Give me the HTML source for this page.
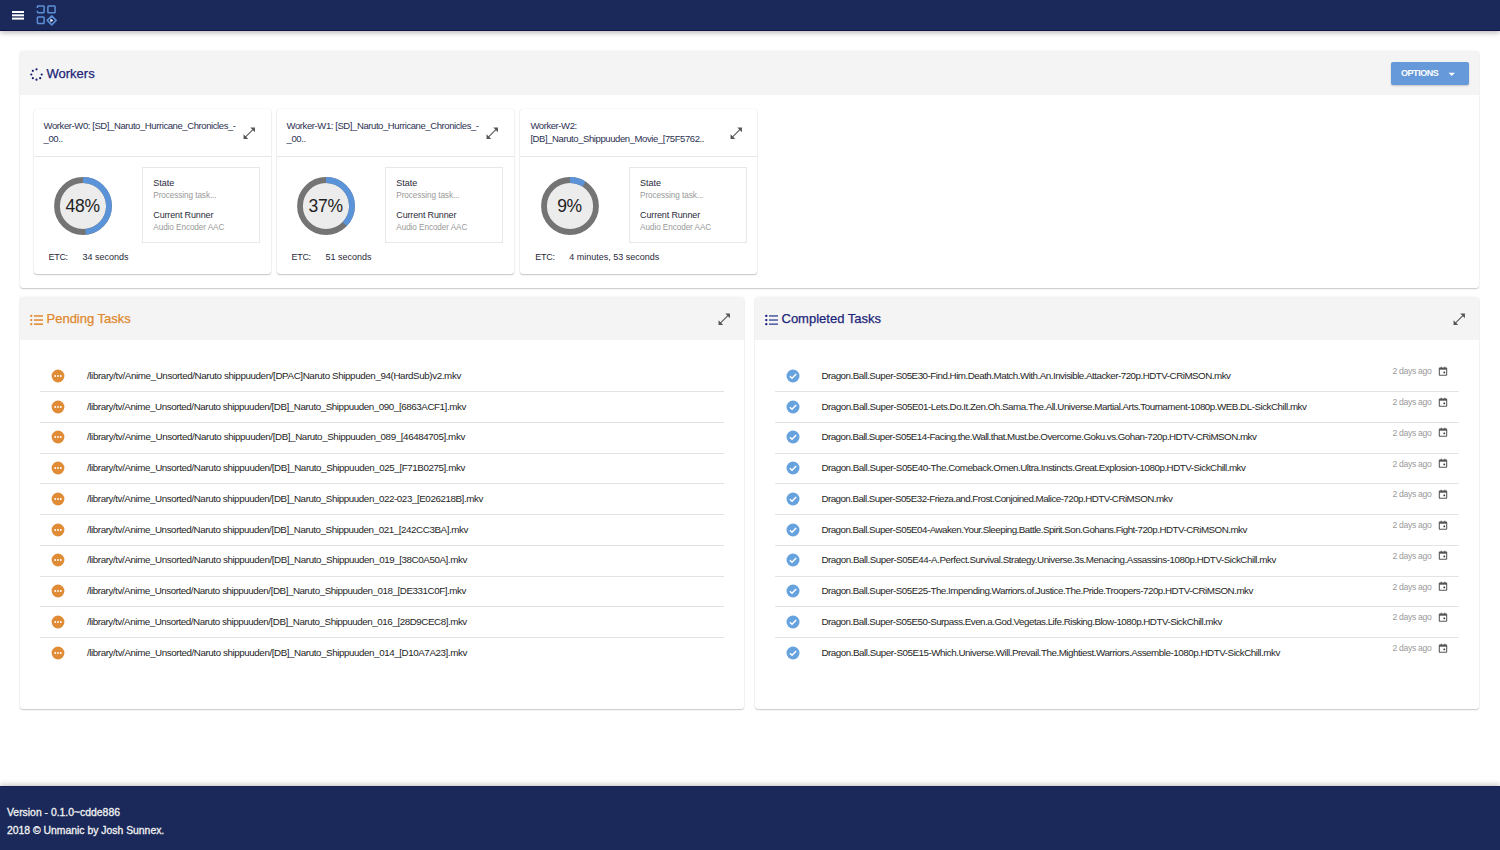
<!DOCTYPE html>
<html><head><meta charset="utf-8"><title>Unmanic</title><style>
*{box-sizing:border-box;margin:0;padding:0}
html,body{width:1500px;height:850px;overflow:hidden;background:#fff;font-family:"Liberation Sans",sans-serif;color:#333;position:relative}
.abs{position:absolute}
.hdr{left:0;top:0;width:1500px;height:31px;background:#1b295a;border-bottom:1px solid #0d1442;box-shadow:0 2px 5px rgba(0,0,0,.26)}
.card{position:absolute;background:#fff;border-radius:3px;box-shadow:0 1px 1.5px rgba(0,0,0,.2),0 0 1.5px rgba(0,0,0,.1)}
.chead{position:absolute;left:0;top:0;right:0;background:#f4f4f4;border-radius:3px 3px 0 0}
.title{position:absolute;font-size:13px;white-space:nowrap;line-height:1;-webkit-text-stroke:0.25px currentColor}
.wcard{position:absolute;background:#fff;border-radius:3px;box-shadow:0 1px 1.5px rgba(0,0,0,.22),0 0 1.5px rgba(0,0,0,.1)}
.wtxt{position:absolute;left:9.6px;top:10px;font-size:9.5px;line-height:13.2px;color:#2c3152;white-space:nowrap;letter-spacing:-0.41px}
.wdiv{position:absolute;left:0;right:0;top:47px;height:1px;background:#e6e6e6}
.sbox{position:absolute;border:1px solid #e8e8e8}
.lbl{position:absolute;font-size:9px;color:#2a2a3a;white-space:nowrap;line-height:1}
.sub{position:absolute;font-size:8.2px;color:#999;white-space:nowrap;line-height:1;letter-spacing:-0.08px}
.row{position:absolute;font-size:9.8px;color:#262626;white-space:nowrap;line-height:1}
.div{position:absolute;height:1px;background:#e3e3e3}
.ago{position:absolute;font-size:8.6px;color:#9a9a9a;white-space:nowrap;line-height:1;letter-spacing:-0.3px}
.ftr{left:0;top:786px;width:1500px;height:64px;background:#1b295a;border-top:1px solid #172153;box-shadow:0 -2px 5px rgba(0,0,0,.2)}
.ftxt{position:absolute;left:7px;font-size:10.4px;color:#f2f2f2;white-space:nowrap;line-height:1;-webkit-text-stroke:0.3px currentColor}
</style></head>
<body>
<div class="abs hdr"></div>
<svg class="abs" style="left:0;top:0" width="70" height="31" viewBox="0 0 70 31">
<rect x="12" y="11" width="12" height="2" fill="#fff"/><rect x="12" y="14.3" width="12" height="2" fill="#fff"/><rect x="12" y="17.6" width="12" height="2" fill="#fff"/>
<path d="M37.4 8 V6.6 Q37.4 5.9 38.1 5.9 H43.4 Q44.1 5.9 44.1 6.6 V12.1 Q44.1 12.8 43.4 12.8 H38.1 Q37.4 12.8 37.4 12.1 V10.7" fill="none" stroke="#5d8fd6" stroke-width="1.5"/>
<rect x="47.9" y="5.9" width="7.2" height="6.9" rx="0.8" fill="none" stroke="#5d8fd6" stroke-width="1.5"/>
<rect x="37.4" y="16.9" width="6.7" height="6.6" rx="0.8" fill="none" stroke="#5d8fd6" stroke-width="1.5"/>
<path d="M51.7 15.9 L56.2 20.4 L51.7 24.9 L47.2 20.4 Z" fill="none" stroke="#5d8fd6" stroke-width="1.5" stroke-linejoin="round"/>
<path d="M50.4 18.5 L53.3 20.4 L50.4 22.3 Z" fill="#fff"/>
</svg>
<div class="card" style="left:20px;top:51px;width:1459px;height:237px">
<div class="chead" style="height:44px"></div>
<svg class="abs" style="left:10px;top:17px" width="13" height="13" viewBox="0 0 13 13"><circle cx="6.50" cy="1.30" r="1.1" fill="#14196a"/><circle cx="11.70" cy="6.50" r="1.1" fill="#14196a"/><circle cx="10.18" cy="10.18" r="1.1" fill="#14196a"/><circle cx="6.50" cy="11.70" r="1.1" fill="#14196a"/><circle cx="2.82" cy="10.18" r="1.1" fill="#14196a"/><circle cx="1.30" cy="6.50" r="1.1" fill="#14196a"/><circle cx="2.82" cy="2.82" r="1.1" fill="#14196a"/></svg>
<div class="title" style="left:26.5px;top:15.5px;color:#1c2579">Workers</div>
<div class="abs" style="left:1371px;top:11px;width:78px;height:23px;background:#6599da;border-radius:2px;box-shadow:0 1px 2px rgba(0,0,0,.2)"></div>
<div class="abs" style="left:1381px;top:18px;font-size:9px;font-weight:bold;color:#fff;letter-spacing:-0.45px;white-space:nowrap;line-height:1">OPTIONS</div>
<svg class="abs" style="left:1428px;top:21px" width="8" height="5" viewBox="0 0 8 5"><path d="M0.5 0.8 H7 L3.75 4 Z" fill="#fff"/></svg>
</div>
<div class="wcard" style="left:34px;top:109px;width:237px;height:165px">
<div class="wtxt" style="left:9.6px">Worker-W0: [SD]_Naruto_Hurricane_Chronicles_-<br>_00..</div>
<div class="wdiv"></div>
<svg class="abs" style="left:207.7px;top:16.7px" width="14.5" height="14.5" viewBox="0 0 14 14"><path d="M2.5 11.5 L11.5 2.5" stroke="#555" stroke-width="1.0"/><path d="M8 1.5 H12.5 V6 Z" fill="#555"/><path d="M1.5 8 V12.5 H6 Z" fill="#555"/></svg>
<svg class="abs" style="left:18.700000000000003px;top:67.2px" width="60" height="60" viewBox="0 0 60 60"><circle cx="30" cy="30" r="26.0" fill="#ececec" stroke="#747474" stroke-width="5.8"/><circle cx="30" cy="30" r="26.0" fill="none" stroke="#5b93d8" stroke-width="5.8" stroke-dasharray="78.41 163.36" transform="rotate(-90 30 30)"/></svg>
<div class="abs" style="left:23.700000000000003px;top:88.2px;width:50px;text-align:center;font-size:17.5px;color:#222;line-height:18px;letter-spacing:-0.3px">48%</div>
<div class="sbox" style="left:108px;top:58px;width:118px;height:76px"></div>
<div class="lbl" style="left:119.3px;top:70px">State</div>
<div class="sub" style="left:119.3px;top:82.5px">Processing task...</div>
<div class="lbl" style="left:119.3px;top:101.8px;letter-spacing:-0.15px">Current Runner</div>
<div class="sub" style="left:119.3px;top:114.5px">Audio Encoder AAC</div>
<div class="lbl" style="left:14.5px;top:144px;letter-spacing:-0.3px">ETC:</div>
<div class="lbl" style="left:48.5px;top:144px">34 seconds</div>
</div>
<div class="wcard" style="left:277px;top:109px;width:237px;height:165px">
<div class="wtxt" style="left:9.6px">Worker-W1: [SD]_Naruto_Hurricane_Chronicles_-<br>_00..</div>
<div class="wdiv"></div>
<svg class="abs" style="left:207.7px;top:16.7px" width="14.5" height="14.5" viewBox="0 0 14 14"><path d="M2.5 11.5 L11.5 2.5" stroke="#555" stroke-width="1.0"/><path d="M8 1.5 H12.5 V6 Z" fill="#555"/><path d="M1.5 8 V12.5 H6 Z" fill="#555"/></svg>
<svg class="abs" style="left:18.700000000000003px;top:67.2px" width="60" height="60" viewBox="0 0 60 60"><circle cx="30" cy="30" r="26.0" fill="#ececec" stroke="#747474" stroke-width="5.8"/><circle cx="30" cy="30" r="26.0" fill="none" stroke="#5b93d8" stroke-width="5.8" stroke-dasharray="60.44 163.36" transform="rotate(-90 30 30)"/></svg>
<div class="abs" style="left:23.700000000000003px;top:88.2px;width:50px;text-align:center;font-size:17.5px;color:#222;line-height:18px;letter-spacing:-0.3px">37%</div>
<div class="sbox" style="left:108px;top:58px;width:118px;height:76px"></div>
<div class="lbl" style="left:119.3px;top:70px">State</div>
<div class="sub" style="left:119.3px;top:82.5px">Processing task...</div>
<div class="lbl" style="left:119.3px;top:101.8px;letter-spacing:-0.15px">Current Runner</div>
<div class="sub" style="left:119.3px;top:114.5px">Audio Encoder AAC</div>
<div class="lbl" style="left:14.5px;top:144px;letter-spacing:-0.3px">ETC:</div>
<div class="lbl" style="left:48.5px;top:144px">51 seconds</div>
</div>
<div class="wcard" style="left:520px;top:109px;width:237px;height:165px">
<div class="wtxt" style="left:10.4px">Worker-W2:<br>[DB]_Naruto_Shippuuden_Movie_[75F5762..</div>
<div class="wdiv"></div>
<svg class="abs" style="left:208.5px;top:16.7px" width="14.5" height="14.5" viewBox="0 0 14 14"><path d="M2.5 11.5 L11.5 2.5" stroke="#555" stroke-width="1.0"/><path d="M8 1.5 H12.5 V6 Z" fill="#555"/><path d="M1.5 8 V12.5 H6 Z" fill="#555"/></svg>
<svg class="abs" style="left:19.5px;top:67.2px" width="60" height="60" viewBox="0 0 60 60"><circle cx="30" cy="30" r="26.0" fill="#ececec" stroke="#747474" stroke-width="5.8"/><circle cx="30" cy="30" r="26.0" fill="none" stroke="#5b93d8" stroke-width="5.8" stroke-dasharray="14.70 163.36" transform="rotate(-90 30 30)"/></svg>
<div class="abs" style="left:24.500000000000004px;top:88.2px;width:50px;text-align:center;font-size:17.5px;color:#222;line-height:18px;letter-spacing:-0.3px">9%</div>
<div class="sbox" style="left:109px;top:58px;width:118px;height:76px"></div>
<div class="lbl" style="left:120.1px;top:70px">State</div>
<div class="sub" style="left:120.1px;top:82.5px">Processing task...</div>
<div class="lbl" style="left:120.1px;top:101.8px;letter-spacing:-0.15px">Current Runner</div>
<div class="sub" style="left:120.1px;top:114.5px">Audio Encoder AAC</div>
<div class="lbl" style="left:15.3px;top:144px;letter-spacing:-0.3px">ETC:</div>
<div class="lbl" style="left:49.3px;top:144px">4 minutes, 53 seconds</div>
</div>
<div class="card" style="left:20px;top:297px;width:724px;height:412px">
<div class="chead" style="height:43px"></div>
<svg class="abs" style="left:9.8px;top:17px" width="14" height="12" viewBox="0 -0.55 14 12"><circle cx="1.3" cy="1.4" r="1.15" fill="#e0882c"/><circle cx="1.3" cy="5.5" r="1.15" fill="#e0882c"/><circle cx="1.3" cy="9.6" r="1.15" fill="#e0882c"/><rect x="4" y="0.65" width="9" height="1.5" fill="#e0882c"/><rect x="4" y="4.75" width="9" height="1.5" fill="#e0882c"/><rect x="4" y="8.85" width="9" height="1.5" fill="#e0882c"/></svg>
<div class="title" style="left:26.5px;top:14.5px;color:#e0882c">Pending Tasks</div>
<svg class="abs" style="left:696.8px;top:15.4px" width="14.5" height="14.5" viewBox="0 0 14 14"><path d="M2.5 11.5 L11.5 2.5" stroke="#555" stroke-width="1.0"/><path d="M8 1.5 H12.5 V6 Z" fill="#555"/><path d="M1.5 8 V12.5 H6 Z" fill="#555"/></svg>
</div>
<div class="row" style="left:87.0px;top:370.80px;letter-spacing:-0.391px">/library/tv/Anime_Unsorted/Naruto shippuuden/[DPAC]Naruto Shippuden_94(HardSub)v2.mkv</div>
<div class="div" style="left:40px;top:391.20px;width:684px"></div>
<svg class="abs" style="left:51.40px;top:368.90px" width="14" height="14" viewBox="0 0 14 14"><circle cx="7" cy="7" r="6.4" fill="#e08b36"/><circle cx="4.2" cy="7" r="0.95" fill="#fff"/><circle cx="7" cy="7" r="0.95" fill="#fff"/><circle cx="9.8" cy="7" r="0.95" fill="#fff"/></svg>
<div class="row" style="left:87.0px;top:401.55px;letter-spacing:-0.426px">/library/tv/Anime_Unsorted/Naruto shippuuden/[DB]_Naruto_Shippuuden_090_[6863ACF1].mkv</div>
<div class="div" style="left:40px;top:421.95px;width:684px"></div>
<svg class="abs" style="left:51.40px;top:399.65px" width="14" height="14" viewBox="0 0 14 14"><circle cx="7" cy="7" r="6.4" fill="#e08b36"/><circle cx="4.2" cy="7" r="0.95" fill="#fff"/><circle cx="7" cy="7" r="0.95" fill="#fff"/><circle cx="9.8" cy="7" r="0.95" fill="#fff"/></svg>
<div class="row" style="left:87.0px;top:432.30px;letter-spacing:-0.400px">/library/tv/Anime_Unsorted/Naruto shippuuden/[DB]_Naruto_Shippuuden_089_[46484705].mkv</div>
<div class="div" style="left:40px;top:452.70px;width:684px"></div>
<svg class="abs" style="left:51.40px;top:430.40px" width="14" height="14" viewBox="0 0 14 14"><circle cx="7" cy="7" r="6.4" fill="#e08b36"/><circle cx="4.2" cy="7" r="0.95" fill="#fff"/><circle cx="7" cy="7" r="0.95" fill="#fff"/><circle cx="9.8" cy="7" r="0.95" fill="#fff"/></svg>
<div class="row" style="left:87.0px;top:463.05px;letter-spacing:-0.419px">/library/tv/Anime_Unsorted/Naruto shippuuden/[DB]_Naruto_Shippuuden_025_[F71B0275].mkv</div>
<div class="div" style="left:40px;top:483.45px;width:684px"></div>
<svg class="abs" style="left:51.40px;top:461.15px" width="14" height="14" viewBox="0 0 14 14"><circle cx="7" cy="7" r="6.4" fill="#e08b36"/><circle cx="4.2" cy="7" r="0.95" fill="#fff"/><circle cx="7" cy="7" r="0.95" fill="#fff"/><circle cx="9.8" cy="7" r="0.95" fill="#fff"/></svg>
<div class="row" style="left:87.0px;top:493.80px;letter-spacing:-0.424px">/library/tv/Anime_Unsorted/Naruto shippuuden/[DB]_Naruto_Shippuuden_022-023_[E026218B].mkv</div>
<div class="div" style="left:40px;top:514.20px;width:684px"></div>
<svg class="abs" style="left:51.40px;top:491.90px" width="14" height="14" viewBox="0 0 14 14"><circle cx="7" cy="7" r="6.4" fill="#e08b36"/><circle cx="4.2" cy="7" r="0.95" fill="#fff"/><circle cx="7" cy="7" r="0.95" fill="#fff"/><circle cx="9.8" cy="7" r="0.95" fill="#fff"/></svg>
<div class="row" style="left:87.0px;top:524.55px;letter-spacing:-0.428px">/library/tv/Anime_Unsorted/Naruto shippuuden/[DB]_Naruto_Shippuuden_021_[242CC3BA].mkv</div>
<div class="div" style="left:40px;top:544.95px;width:684px"></div>
<svg class="abs" style="left:51.40px;top:522.65px" width="14" height="14" viewBox="0 0 14 14"><circle cx="7" cy="7" r="6.4" fill="#e08b36"/><circle cx="4.2" cy="7" r="0.95" fill="#fff"/><circle cx="7" cy="7" r="0.95" fill="#fff"/><circle cx="9.8" cy="7" r="0.95" fill="#fff"/></svg>
<div class="row" style="left:87.0px;top:555.30px;letter-spacing:-0.421px">/library/tv/Anime_Unsorted/Naruto shippuuden/[DB]_Naruto_Shippuuden_019_[38C0A50A].mkv</div>
<div class="div" style="left:40px;top:575.70px;width:684px"></div>
<svg class="abs" style="left:51.40px;top:553.40px" width="14" height="14" viewBox="0 0 14 14"><circle cx="7" cy="7" r="6.4" fill="#e08b36"/><circle cx="4.2" cy="7" r="0.95" fill="#fff"/><circle cx="7" cy="7" r="0.95" fill="#fff"/><circle cx="9.8" cy="7" r="0.95" fill="#fff"/></svg>
<div class="row" style="left:87.0px;top:586.05px;letter-spacing:-0.445px">/library/tv/Anime_Unsorted/Naruto shippuuden/[DB]_Naruto_Shippuuden_018_[DE331C0F].mkv</div>
<div class="div" style="left:40px;top:606.45px;width:684px"></div>
<svg class="abs" style="left:51.40px;top:584.15px" width="14" height="14" viewBox="0 0 14 14"><circle cx="7" cy="7" r="6.4" fill="#e08b36"/><circle cx="4.2" cy="7" r="0.95" fill="#fff"/><circle cx="7" cy="7" r="0.95" fill="#fff"/><circle cx="9.8" cy="7" r="0.95" fill="#fff"/></svg>
<div class="row" style="left:87.0px;top:616.80px;letter-spacing:-0.447px">/library/tv/Anime_Unsorted/Naruto shippuuden/[DB]_Naruto_Shippuuden_016_[28D9CEC8].mkv</div>
<div class="div" style="left:40px;top:637.20px;width:684px"></div>
<svg class="abs" style="left:51.40px;top:614.90px" width="14" height="14" viewBox="0 0 14 14"><circle cx="7" cy="7" r="6.4" fill="#e08b36"/><circle cx="4.2" cy="7" r="0.95" fill="#fff"/><circle cx="7" cy="7" r="0.95" fill="#fff"/><circle cx="9.8" cy="7" r="0.95" fill="#fff"/></svg>
<div class="row" style="left:87.0px;top:647.55px;letter-spacing:-0.421px">/library/tv/Anime_Unsorted/Naruto shippuuden/[DB]_Naruto_Shippuuden_014_[D10A7A23].mkv</div>
<svg class="abs" style="left:51.40px;top:645.65px" width="14" height="14" viewBox="0 0 14 14"><circle cx="7" cy="7" r="6.4" fill="#e08b36"/><circle cx="4.2" cy="7" r="0.95" fill="#fff"/><circle cx="7" cy="7" r="0.95" fill="#fff"/><circle cx="9.8" cy="7" r="0.95" fill="#fff"/></svg>
<div class="card" style="left:755px;top:297px;width:724px;height:412px">
<div class="chead" style="height:43px"></div>
<svg class="abs" style="left:9.8px;top:17px" width="14" height="12" viewBox="0 -0.55 14 12"><circle cx="1.3" cy="1.4" r="1.15" fill="#10167a"/><circle cx="1.3" cy="5.5" r="1.15" fill="#10167a"/><circle cx="1.3" cy="9.6" r="1.15" fill="#10167a"/><rect x="4" y="0.65" width="9" height="1.5" fill="#4a5a9e"/><rect x="4" y="4.75" width="9" height="1.5" fill="#4a5a9e"/><rect x="4" y="8.85" width="9" height="1.5" fill="#4a5a9e"/></svg>
<div class="title" style="left:26.5px;top:14.5px;color:#1c2579">Completed Tasks</div>
<svg class="abs" style="left:696.8px;top:15.4px" width="14.5" height="14.5" viewBox="0 0 14 14"><path d="M2.5 11.5 L11.5 2.5" stroke="#555" stroke-width="1.0"/><path d="M8 1.5 H12.5 V6 Z" fill="#555"/><path d="M1.5 8 V12.5 H6 Z" fill="#555"/></svg>
</div>
<div class="row" style="left:821.4px;top:370.80px;letter-spacing:-0.502px">Dragon.Ball.Super-S05E30-Find.Him.Death.Match.With.An.Invisible.Attacker-720p.HDTV-CRiMSON.mkv</div>
<div class="div" style="left:775px;top:391.20px;width:684px"></div>
<svg class="abs" style="left:786.20px;top:368.90px" width="14" height="14" viewBox="0 0 14 14"><circle cx="7" cy="7" r="6.5" fill="#65a2de"/><path d="M3.9 7.2 L6 9.2 L10.2 4.9" fill="none" stroke="#fff" stroke-width="1.5"/></svg>
<div class="ago" style="left:1392.5px;top:367.40px">2 days ago</div>
<svg class="abs" style="left:1438px;top:365.90px" width="10" height="10" viewBox="0 0 10 10"><rect x="1.3" y="2" width="7.4" height="7.2" rx="0.4" fill="none" stroke="#555" stroke-width="1.05"/><rect x="1.3" y="2" width="7.4" height="1.7" fill="#555"/><rect x="2.7" y="0.7" width="1" height="1.6" fill="#555"/><rect x="6.3" y="0.7" width="1" height="1.6" fill="#555"/><rect x="5.5" y="5.6" width="1.6" height="1.6" fill="#2a2a40"/></svg>
<div class="row" style="left:821.4px;top:401.55px;letter-spacing:-0.484px">Dragon.Ball.Super-S05E01-Lets.Do.It.Zen.Oh.Sama.The.All.Universe.Martial.Arts.Tournament-1080p.WEB.DL-SickChill.mkv</div>
<div class="div" style="left:775px;top:421.95px;width:684px"></div>
<svg class="abs" style="left:786.20px;top:399.65px" width="14" height="14" viewBox="0 0 14 14"><circle cx="7" cy="7" r="6.5" fill="#65a2de"/><path d="M3.9 7.2 L6 9.2 L10.2 4.9" fill="none" stroke="#fff" stroke-width="1.5"/></svg>
<div class="ago" style="left:1392.5px;top:398.15px">2 days ago</div>
<svg class="abs" style="left:1438px;top:396.65px" width="10" height="10" viewBox="0 0 10 10"><rect x="1.3" y="2" width="7.4" height="7.2" rx="0.4" fill="none" stroke="#555" stroke-width="1.05"/><rect x="1.3" y="2" width="7.4" height="1.7" fill="#555"/><rect x="2.7" y="0.7" width="1" height="1.6" fill="#555"/><rect x="6.3" y="0.7" width="1" height="1.6" fill="#555"/><rect x="5.5" y="5.6" width="1.6" height="1.6" fill="#2a2a40"/></svg>
<div class="row" style="left:821.4px;top:432.30px;letter-spacing:-0.537px">Dragon.Ball.Super-S05E14-Facing.the.Wall.that.Must.be.Overcome.Goku.vs.Gohan-720p.HDTV-CRiMSON.mkv</div>
<div class="div" style="left:775px;top:452.70px;width:684px"></div>
<svg class="abs" style="left:786.20px;top:430.40px" width="14" height="14" viewBox="0 0 14 14"><circle cx="7" cy="7" r="6.5" fill="#65a2de"/><path d="M3.9 7.2 L6 9.2 L10.2 4.9" fill="none" stroke="#fff" stroke-width="1.5"/></svg>
<div class="ago" style="left:1392.5px;top:428.90px">2 days ago</div>
<svg class="abs" style="left:1438px;top:427.40px" width="10" height="10" viewBox="0 0 10 10"><rect x="1.3" y="2" width="7.4" height="7.2" rx="0.4" fill="none" stroke="#555" stroke-width="1.05"/><rect x="1.3" y="2" width="7.4" height="1.7" fill="#555"/><rect x="2.7" y="0.7" width="1" height="1.6" fill="#555"/><rect x="6.3" y="0.7" width="1" height="1.6" fill="#555"/><rect x="5.5" y="5.6" width="1.6" height="1.6" fill="#2a2a40"/></svg>
<div class="row" style="left:821.4px;top:463.05px;letter-spacing:-0.491px">Dragon.Ball.Super-S05E40-The.Comeback.Omen.Ultra.Instincts.Great.Explosion-1080p.HDTV-SickChill.mkv</div>
<div class="div" style="left:775px;top:483.45px;width:684px"></div>
<svg class="abs" style="left:786.20px;top:461.15px" width="14" height="14" viewBox="0 0 14 14"><circle cx="7" cy="7" r="6.5" fill="#65a2de"/><path d="M3.9 7.2 L6 9.2 L10.2 4.9" fill="none" stroke="#fff" stroke-width="1.5"/></svg>
<div class="ago" style="left:1392.5px;top:459.65px">2 days ago</div>
<svg class="abs" style="left:1438px;top:458.15px" width="10" height="10" viewBox="0 0 10 10"><rect x="1.3" y="2" width="7.4" height="7.2" rx="0.4" fill="none" stroke="#555" stroke-width="1.05"/><rect x="1.3" y="2" width="7.4" height="1.7" fill="#555"/><rect x="2.7" y="0.7" width="1" height="1.6" fill="#555"/><rect x="6.3" y="0.7" width="1" height="1.6" fill="#555"/><rect x="5.5" y="5.6" width="1.6" height="1.6" fill="#2a2a40"/></svg>
<div class="row" style="left:821.4px;top:493.80px;letter-spacing:-0.541px">Dragon.Ball.Super-S05E32-Frieza.and.Frost.Conjoined.Malice-720p.HDTV-CRiMSON.mkv</div>
<div class="div" style="left:775px;top:514.20px;width:684px"></div>
<svg class="abs" style="left:786.20px;top:491.90px" width="14" height="14" viewBox="0 0 14 14"><circle cx="7" cy="7" r="6.5" fill="#65a2de"/><path d="M3.9 7.2 L6 9.2 L10.2 4.9" fill="none" stroke="#fff" stroke-width="1.5"/></svg>
<div class="ago" style="left:1392.5px;top:490.40px">2 days ago</div>
<svg class="abs" style="left:1438px;top:488.90px" width="10" height="10" viewBox="0 0 10 10"><rect x="1.3" y="2" width="7.4" height="7.2" rx="0.4" fill="none" stroke="#555" stroke-width="1.05"/><rect x="1.3" y="2" width="7.4" height="1.7" fill="#555"/><rect x="2.7" y="0.7" width="1" height="1.6" fill="#555"/><rect x="6.3" y="0.7" width="1" height="1.6" fill="#555"/><rect x="5.5" y="5.6" width="1.6" height="1.6" fill="#2a2a40"/></svg>
<div class="row" style="left:821.4px;top:524.55px;letter-spacing:-0.527px">Dragon.Ball.Super-S05E04-Awaken.Your.Sleeping.Battle.Spirit.Son.Gohans.Fight-720p.HDTV-CRiMSON.mkv</div>
<div class="div" style="left:775px;top:544.95px;width:684px"></div>
<svg class="abs" style="left:786.20px;top:522.65px" width="14" height="14" viewBox="0 0 14 14"><circle cx="7" cy="7" r="6.5" fill="#65a2de"/><path d="M3.9 7.2 L6 9.2 L10.2 4.9" fill="none" stroke="#fff" stroke-width="1.5"/></svg>
<div class="ago" style="left:1392.5px;top:521.15px">2 days ago</div>
<svg class="abs" style="left:1438px;top:519.65px" width="10" height="10" viewBox="0 0 10 10"><rect x="1.3" y="2" width="7.4" height="7.2" rx="0.4" fill="none" stroke="#555" stroke-width="1.05"/><rect x="1.3" y="2" width="7.4" height="1.7" fill="#555"/><rect x="2.7" y="0.7" width="1" height="1.6" fill="#555"/><rect x="6.3" y="0.7" width="1" height="1.6" fill="#555"/><rect x="5.5" y="5.6" width="1.6" height="1.6" fill="#2a2a40"/></svg>
<div class="row" style="left:821.4px;top:555.30px;letter-spacing:-0.469px">Dragon.Ball.Super-S05E44-A.Perfect.Survival.Strategy.Universe.3s.Menacing.Assassins-1080p.HDTV-SickChill.mkv</div>
<div class="div" style="left:775px;top:575.70px;width:684px"></div>
<svg class="abs" style="left:786.20px;top:553.40px" width="14" height="14" viewBox="0 0 14 14"><circle cx="7" cy="7" r="6.5" fill="#65a2de"/><path d="M3.9 7.2 L6 9.2 L10.2 4.9" fill="none" stroke="#fff" stroke-width="1.5"/></svg>
<div class="ago" style="left:1392.5px;top:551.90px">2 days ago</div>
<svg class="abs" style="left:1438px;top:550.40px" width="10" height="10" viewBox="0 0 10 10"><rect x="1.3" y="2" width="7.4" height="7.2" rx="0.4" fill="none" stroke="#555" stroke-width="1.05"/><rect x="1.3" y="2" width="7.4" height="1.7" fill="#555"/><rect x="2.7" y="0.7" width="1" height="1.6" fill="#555"/><rect x="6.3" y="0.7" width="1" height="1.6" fill="#555"/><rect x="5.5" y="5.6" width="1.6" height="1.6" fill="#2a2a40"/></svg>
<div class="row" style="left:821.4px;top:586.05px;letter-spacing:-0.496px">Dragon.Ball.Super-S05E25-The.Impending.Warriors.of.Justice.The.Pride.Troopers-720p.HDTV-CRiMSON.mkv</div>
<div class="div" style="left:775px;top:606.45px;width:684px"></div>
<svg class="abs" style="left:786.20px;top:584.15px" width="14" height="14" viewBox="0 0 14 14"><circle cx="7" cy="7" r="6.5" fill="#65a2de"/><path d="M3.9 7.2 L6 9.2 L10.2 4.9" fill="none" stroke="#fff" stroke-width="1.5"/></svg>
<div class="ago" style="left:1392.5px;top:582.65px">2 days ago</div>
<svg class="abs" style="left:1438px;top:581.15px" width="10" height="10" viewBox="0 0 10 10"><rect x="1.3" y="2" width="7.4" height="7.2" rx="0.4" fill="none" stroke="#555" stroke-width="1.05"/><rect x="1.3" y="2" width="7.4" height="1.7" fill="#555"/><rect x="2.7" y="0.7" width="1" height="1.6" fill="#555"/><rect x="6.3" y="0.7" width="1" height="1.6" fill="#555"/><rect x="5.5" y="5.6" width="1.6" height="1.6" fill="#2a2a40"/></svg>
<div class="row" style="left:821.4px;top:616.80px;letter-spacing:-0.508px">Dragon.Ball.Super-S05E50-Surpass.Even.a.God.Vegetas.Life.Risking.Blow-1080p.HDTV-SickChill.mkv</div>
<div class="div" style="left:775px;top:637.20px;width:684px"></div>
<svg class="abs" style="left:786.20px;top:614.90px" width="14" height="14" viewBox="0 0 14 14"><circle cx="7" cy="7" r="6.5" fill="#65a2de"/><path d="M3.9 7.2 L6 9.2 L10.2 4.9" fill="none" stroke="#fff" stroke-width="1.5"/></svg>
<div class="ago" style="left:1392.5px;top:613.40px">2 days ago</div>
<svg class="abs" style="left:1438px;top:611.90px" width="10" height="10" viewBox="0 0 10 10"><rect x="1.3" y="2" width="7.4" height="7.2" rx="0.4" fill="none" stroke="#555" stroke-width="1.05"/><rect x="1.3" y="2" width="7.4" height="1.7" fill="#555"/><rect x="2.7" y="0.7" width="1" height="1.6" fill="#555"/><rect x="6.3" y="0.7" width="1" height="1.6" fill="#555"/><rect x="5.5" y="5.6" width="1.6" height="1.6" fill="#2a2a40"/></svg>
<div class="row" style="left:821.4px;top:647.55px;letter-spacing:-0.461px">Dragon.Ball.Super-S05E15-Which.Universe.Will.Prevail.The.Mightiest.Warriors.Assemble-1080p.HDTV-SickChill.mkv</div>
<svg class="abs" style="left:786.20px;top:645.65px" width="14" height="14" viewBox="0 0 14 14"><circle cx="7" cy="7" r="6.5" fill="#65a2de"/><path d="M3.9 7.2 L6 9.2 L10.2 4.9" fill="none" stroke="#fff" stroke-width="1.5"/></svg>
<div class="ago" style="left:1392.5px;top:644.15px">2 days ago</div>
<svg class="abs" style="left:1438px;top:642.65px" width="10" height="10" viewBox="0 0 10 10"><rect x="1.3" y="2" width="7.4" height="7.2" rx="0.4" fill="none" stroke="#555" stroke-width="1.05"/><rect x="1.3" y="2" width="7.4" height="1.7" fill="#555"/><rect x="2.7" y="0.7" width="1" height="1.6" fill="#555"/><rect x="6.3" y="0.7" width="1" height="1.6" fill="#555"/><rect x="5.5" y="5.6" width="1.6" height="1.6" fill="#2a2a40"/></svg>
<div class="abs ftr"></div>
<div class="ftxt" style="top:808px">Version - 0.1.0~cdde886</div>
<div class="ftxt" style="top:826px">2018 &copy; Unmanic by Josh Sunnex.</div>
</body></html>
